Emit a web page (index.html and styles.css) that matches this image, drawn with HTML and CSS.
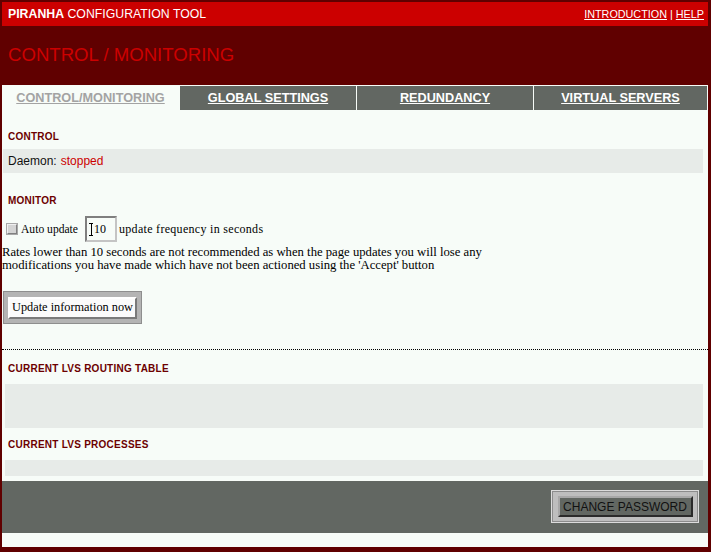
FILE: index.html
```html
<!DOCTYPE html>
<html>
<head>
<meta charset="utf-8">
<title>Piranha Configuration Tool</title>
<link rel="stylesheet" href="styles.css">
</head>
<body>
<div class="page">
  <div class="topbar">
    <span class="brand"><b>PIRANHA</b> CONFIGURATION TOOL</span>
    <span class="links"><a href="#">INTRODUCTION</a> | <a href="#">HELP</a></span>
  </div>
  <div class="titlebar"><h1>CONTROL / MONITORING</h1></div>
  <div class="content">
    <nav class="tabs">
      <a href="#" class="tab active">CONTROL/MONITORING</a>
      <a href="#" class="tab">GLOBAL SETTINGS</a>
      <a href="#" class="tab">REDUNDANCY</a>
      <a href="#" class="tab">VIRTUAL SERVERS</a>
    </nav>
    <h2 class="sec sec-control">CONTROL</h2>
    <div class="row daemon">Daemon: <span class="stopped">stopped</span></div>
    <h2 class="sec sec-monitor">MONITOR</h2>
    <div class="auto">
      <span class="check"></span>
      <span class="label label-auto">Auto update</span>
      <span class="field"><span class="ibeam"></span>10</span>
      <span class="label label-freq">update frequency in seconds</span>
    </div>
    <p class="note">Rates lower than 10 seconds are not recommended as when the page updates you will lose any<br>modifications you have made which have not been actioned using the 'Accept' button</p>
    <div class="btnframe"><button class="btn-update">Update information now</button></div>
    <div class="dots"></div>
    <h2 class="sec sec-routing">CURRENT LVS ROUTING TABLE</h2>
    <div class="box routing"></div>
    <h2 class="sec sec-procs">CURRENT LVS PROCESSES</h2>
    <div class="box procs"></div>
    <div class="footer">
      <div class="pwframe"><button class="btn-pw">CHANGE PASSWORD</button></div>
    </div>
  </div>
</div>
</body>
</html>
```

FILE: styles.css
```css
html, body {
  margin: 0;
  padding: 0;
}
body {
  background: #600000;
  width: 711px;
  height: 552px;
  overflow: hidden;
  font-family: "Liberation Sans", Arial, sans-serif;
}
.page {
  padding: 2px 3px 5px 2px;
}
.topbar {
  height: 24px;
  background: #cc0000;
  color: #ffffff;
  display: flex;
  justify-content: space-between;
  align-items: center;
  padding: 0 4px 0 6px;
}
.brand {
  font-size: 12.3px;
  line-height: 14px;
}
.brand b {
  font-weight: bold;
}
.links {
  font-size: 10.8px;
  line-height: 13px;
  padding-top: 1px;
}
.links a {
  color: #ffffff;
  text-decoration: underline;
}
.titlebar {
  height: 59px;
  display: flex;
  align-items: flex-start;
}
.titlebar h1 {
  margin: 18px 0 0 6px;
  font-size: 18.6px;
  line-height: 22px;
  font-weight: normal;
  color: #cc0000;
}
.content {
  background: #f7fcf8;
  height: 462px;
  display: flex;
  flex-direction: column;
}
.tabs {
  display: grid;
  grid-template-columns: 177px 176px 176px 1fr;
  column-gap: 1px;
  padding: 1px 1px 0 0;
  height: 24px;
}
.tab {
  display: flex;
  align-items: center;
  justify-content: center;
  background: #626762;
  color: #ffffff;
  font-size: 12.7px;
  font-weight: bold;
  text-decoration: underline;
  line-height: 15px;
}
.tab.active {
  background: transparent;
  color: #a3a3a3;
}
.sec {
  margin: 0;
  padding-left: 6px;
  font-size: 10px;
  letter-spacing: 0.25px;
  line-height: 12px;
  font-weight: bold;
  color: #6c0000;
}
.sec-control { margin-top: 21px; }
.sec-monitor { margin-top: 22px; }
.sec-routing { margin-top: 13px; }
.sec-procs { margin-top: 11px; }
.row {
  margin: 6px 5px 0 1px;
  height: 24px;
  background: #e7ebe8;
  display: flex;
  align-items: center;
  padding-left: 5px;
  font-size: 12px;
  color: #111111;
}
.stopped {
  color: #cc0000;
  margin-left: 4px;
}
.auto {
  margin-top: 9px;
  margin-left: 3px;
  height: 26px;
  display: flex;
  align-items: center;
  font-family: "Liberation Serif", "Times New Roman", serif;
  font-size: 12px;
  color: #000000;
}
.label-auto {
  font-size: 11.6px;
}
.label-freq {
  letter-spacing: 0.3px;
}
.check {
  width: 8px;
  height: 8px;
  margin: 0 4px 1px 2px;
  background: #d4d4d4;
  border: 1px solid;
  border-color: #f0f0f0 #808080 #808080 #f0f0f0;
  box-shadow: 0 0 0 1px #a8a8a8;
}
.field {
  box-sizing: border-box;
  width: 32px;
  height: 26px;
  margin: 0 2px 0 7px;
  border: 2px solid;
  border-color: #7f7f7f #c4c4c4 #c4c4c4 #7f7f7f;
  display: flex;
  align-items: center;
  padding-left: 7px;
  font-size: 12px;
  position: relative;
}
.ibeam {
  position: absolute;
  left: 2px;
  top: 5px;
  width: 4px;
  height: 13px;
  border-top: 1px solid #000;
  border-bottom: 1px solid #000;
  box-sizing: border-box;
  background: linear-gradient(#000, #000) center / 1px 100% no-repeat;
}
.note {
  margin: 4px 0 0 0;
  font-family: "Liberation Serif", "Times New Roman", serif;
  font-size: 12.7px;
  line-height: 13px;
  color: #000000;
}
.btnframe {
  margin: 19px 0 0 1px;
  width: 139px;
  height: 33px;
  box-sizing: border-box;
  background: #b4b4b4;
  border: 1px solid #8e8e8e;
  display: flex;
  align-items: center;
  justify-content: center;
}
.btn-update {
  width: 129px;
  height: 22px;
  box-sizing: border-box;
  padding: 0;
  background: #fbfbfb;
  border: 2px solid;
  border-color: #ffffff #7a7a7a #7a7a7a #ffffff;
  font-family: "Liberation Serif", "Times New Roman", serif;
  font-size: 12.3px;
  color: #000000;
}
.dots {
  margin-top: 25px;
  height: 0;
  border-top: 1px dotted #000000;
}
.box {
  margin: 9px 5px 0 3px;
  background: #e7ebe8;
}
.routing { height: 44px; }
.procs { height: 16px; }
.footer {
  margin-top: 5px;
  height: 52px;
  background: #626762;
  display: flex;
  justify-content: flex-end;
  align-items: flex-start;
  padding: 9px 9px 0 0;
  box-sizing: border-box;
}
.pwframe {
  width: 148px;
  height: 33px;
  box-sizing: border-box;
  background: #bebebe;
  border: 1px solid #dcdcdc;
  box-shadow: inset 0 0 0 1px #8c8c8c;
  display: flex;
  align-items: center;
  justify-content: center;
}
.btn-pw {
  width: 135px;
  height: 21px;
  box-sizing: border-box;
  padding: 0;
  background: #626762;
  border: 2px solid;
  border-color: #a8a8a8 #2a2a2a #2a2a2a #a8a8a8;
  font-family: "Liberation Sans", Arial, sans-serif;
  font-size: 12px;
  color: #111111;
}
```
